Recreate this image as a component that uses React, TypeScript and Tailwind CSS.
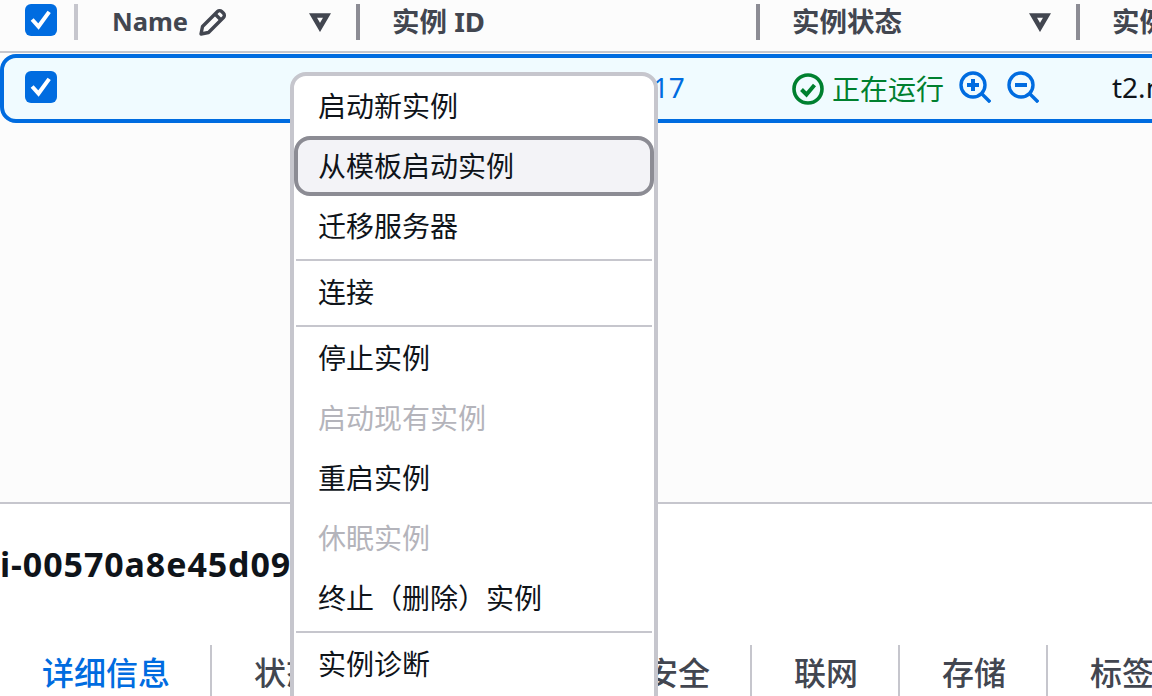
import React from 'react';

const font = "font-['Noto_Sans','Noto_Sans_CJK_SC',sans-serif]";

const Checkbox = () => (
  <div className="w-8 h-8 rounded-[6px] bg-[#006ce0] flex items-center justify-center shrink-0">
    <svg width="24" height="24" viewBox="0 0 24 24" fill="none" stroke="#fff" strokeWidth="4" strokeLinecap="square">
      <path d="M4.5 13 9.5 18.5 19 5.5" />
    </svg>
  </div>
);

const Caret = () => (
  <svg width="22" height="20" viewBox="0 0 22 20" fill="none" stroke="#424650" strokeWidth="4.6" strokeLinejoin="miter">
    <path d="M4 3.5h14L11 15.5z" />
  </svg>
);

const Pencil = () => (
  <svg width="30" height="30" viewBox="0 0 30 30" fill="none" stroke="#424650" strokeWidth="3.4" strokeLinejoin="round">
    <path d="M3 27l1.5-7.5L19.5 4.5a3 3 0 0 1 4.2 0l1.8 1.8a3 3 0 0 1 0 4.2L10.5 25.5z" />
    <path d="M17 7l6 6" />
  </svg>
);

const HeaderDivider = ({ light }: { light?: boolean }) => (
  <div className={`w-1 h-9 shrink-0 ${light ? 'bg-[#c6c6cd]' : 'bg-[#8c8c94]'}`} />
);

const ZoomIcon = ({ plus }: { plus?: boolean }) => (
  <svg width="32" height="32" viewBox="0 0 32 32" fill="none" stroke="#006ce0" strokeWidth="3.4">
    <circle cx="14" cy="14" r="12" />
    <path d="M23 23l7 7" strokeLinecap="square" />
    <path d="M8 14h12" strokeWidth="4" />
    {plus && <path d="M14 8v12" strokeWidth="4" />}
  </svg>
);

const StatusIcon = () => (
  <svg width="32" height="32" viewBox="0 0 32 32" fill="none" stroke="#00802f" strokeWidth="3.6">
    <circle cx="16" cy="16" r="14" />
    <path d="M9.5 16.5l5 5 8-9.5" strokeWidth="4" />
  </svg>
);

const MenuItem = ({ label, disabled, active }: { label: string; disabled?: boolean; active?: boolean }) => (
  <div
    className={`h-[60px] flex items-center text-[28px] rounded-[16px] border-4 pl-[20px] ${
      active ? 'bg-[#f3f3f7] border-[#8c8c94]' : 'border-transparent'
    } ${disabled ? 'text-[#b4b4bb]' : 'text-[#0f141a]'}`}
  >
    {label}
  </div>
);

const MenuDivider = () => <div className="h-0.5 bg-[#c6c6cd] mt-[3px] mb-[1px] mx-[2px]" />;

const tabs = ['详细信息', '状态和警报', '监控', '安全', '联网', '存储', '标签'];

export default function App() {
  return (
    <div className={`relative w-[1152px] h-[696px] overflow-hidden bg-white ${font}`}>
      <div className="h-[504px] bg-[#fcfcfc] border-b-2 border-[#c6c6cd]">
        {/* 表头 */}
        <div className="h-[53px] border-b-2 border-[#c6c6cd] flex items-start pt-[4px] text-[#424650] text-[27.5px] font-bold">
          <div className="w-[78px] h-9 flex items-start justify-between pl-[25px] pr-0 shrink-0">
            <Checkbox />
            <HeaderDivider light />
          </div>
          <div className="w-[282px] h-9 flex items-center justify-between pl-[34px] shrink-0">
            <div className="flex items-center gap-[10px]">
              <span className="text-[25.5px] -mt-[2px]">Name</span>
              <Pencil />
            </div>
            <div className="flex items-center gap-[25px]">
              <Caret />
              <HeaderDivider />
            </div>
          </div>
          <div className="w-[400px] h-9 flex items-center justify-between pl-[32px] shrink-0">
            <span>实例 ID</span>
            <HeaderDivider />
          </div>
          <div className="w-[320px] h-9 flex items-center justify-between pl-[32px] shrink-0">
            <span>实例状态</span>
            <div className="flex items-center gap-[25px]">
              <Caret />
              <HeaderDivider />
            </div>
          </div>
          <div className="h-9 flex items-center pl-[32px] whitespace-nowrap">实例类型</div>
        </div>

        {/* 选中行 */}
        <div className="h-[69px] mt-[1px] w-[1172px] border-4 border-[#006ce0] rounded-[16px] bg-[#f0fbff] flex items-start text-[28px] whitespace-nowrap">
          <div className="w-[109px] pl-[21px] pt-[13px] shrink-0">
            <Checkbox />
          </div>
          <div className="w-[280px] shrink-0" />
          <div className="w-[399px] pt-[8px] shrink-0 text-[#006ce0] tracking-[0.1px]">i-00570a8e45d09ab17</div>
          <div className="w-[320px] shrink-0 flex items-center pt-[10px]">
            <StatusIcon />
            <span className="ml-[8px] text-[#00802f]">正在运行</span>
            <span className="ml-[15px] -mt-1 flex gap-4">
              <ZoomIcon plus />
              <ZoomIcon />
            </span>
          </div>
          <div className="pt-[8px] text-[#0f141a]">t2.micro</div>
        </div>
      </div>

      {/* 下方分割面板 */}
      <div className="pt-[38px] h-[141px] text-[34px] font-bold text-[#0f141a] whitespace-nowrap leading-[44px] tracking-[0.9px]">
        i-00570a8e45d09ab17
      </div>
      <div className="flex w-[1300px] h-[60px] text-[32px] text-[#424650] font-medium whitespace-nowrap">
        {tabs.map((t, i) => (
          <div
            key={t}
            className={`pl-[42px] pr-[40px] h-full flex items-start border-[#c6c6cd] ${
              i > 0 ? 'border-l-2' : 'text-[#006ce0]'
            }`}
          >
            <span className="pt-[4px]">{t}</span>
          </div>
        ))}
      </div>

      {/* 操作菜单 */}
      <div className="absolute left-[290px] top-[72px] w-[368px] h-[640px] bg-white border-4 border-[#c6c6cd] rounded-[16px] pt-0">
        <MenuItem label="启动新实例" />
        <MenuItem label="从模板启动实例" active />
        <MenuItem label="迁移服务器" />
        <MenuDivider />
        <MenuItem label="连接" />
        <MenuDivider />
        <MenuItem label="停止实例" />
        <MenuItem label="启动现有实例" disabled />
        <MenuItem label="重启实例" />
        <MenuItem label="休眠实例" disabled />
        <MenuItem label="终止（删除）实例" />
        <MenuDivider />
        <MenuItem label="实例诊断" />
      </div>
    </div>
  );
}
